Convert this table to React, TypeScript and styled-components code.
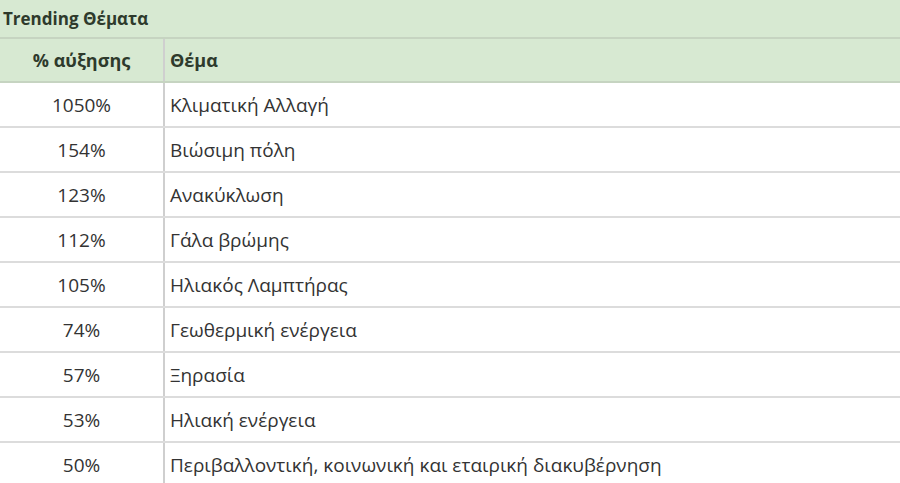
import React from 'react';
import styled, { createGlobalStyle } from 'styled-components';

const GlobalStyle = createGlobalStyle`
  html, body {
    margin: 0;
    padding: 0;
    background: #ffffff;
  }
  body {
    font-family: "Open Sans", "Noto Sans", sans-serif;
    color: #333333;
    overflow: hidden;
  }
`;

const Sheet = styled.div`
  width: 900px;
  height: 483px;
  overflow: hidden;
  background: #ffffff;
`;

const TitleBar = styled.div`
  height: 37px;
  display: flex;
  align-items: center;
  padding-left: 3px;
  background: #d7e9d2;
  border-bottom: 2px solid #c6d4c1;
  font-weight: 700;
  font-size: 17px;
  color: #2e3a2c;
`;

const Row = styled.div<{ $head?: boolean }>`
  display: grid;
  grid-template-columns: 165px 1fr;
  height: ${p => (p.$head ? '42px' : '43px')};
  background: ${p => (p.$head ? '#d7e9d2' : '#ffffff')};
  border-bottom: 2px solid ${p => (p.$head ? '#c6d4c1' : '#dcdcdc')};
  font-weight: ${p => (p.$head ? 700 : 400)};
  font-size: ${p => (p.$head ? '18px' : '19px')};
  color: ${p => (p.$head ? '#2e3a2c' : '#333333')};
`;

const Cell = styled.div<{ $center?: boolean }>`
  display: flex;
  align-items: center;
  justify-content: ${p => (p.$center ? 'center' : 'flex-start')};
  padding-left: ${p => (p.$center ? '0' : '5px')};
  border-right: ${p => (p.$center ? '2px solid #cfcfcf' : 'none')};
  white-space: nowrap;
`;

const rows: [string, string][] = [
  ['1050%', 'Κλιματική Αλλαγή'],
  ['154%', 'Βιώσιμη πόλη'],
  ['123%', 'Ανακύκλωση'],
  ['112%', 'Γάλα βρώμης'],
  ['105%', 'Ηλιακός Λαμπτήρας'],
  ['74%', 'Γεωθερμική ενέργεια'],
  ['57%', 'Ξηρασία'],
  ['53%', 'Ηλιακή ενέργεια'],
  ['50%', 'Περιβαλλοντική, κοινωνική και εταιρική διακυβέρνηση'],
];

export default function App() {
  return (
    <>
      <GlobalStyle />
      <Sheet>
        <TitleBar>Trending Θέματα</TitleBar>
        <Row $head>
          <Cell $center>% αύξησης</Cell>
          <Cell>Θέμα</Cell>
        </Row>
        {rows.map(([pct, topic]) => (
          <Row key={topic}>
            <Cell $center>{pct}</Cell>
            <Cell>{topic}</Cell>
          </Row>
        ))}
      </Sheet>
    </>
  );
}
